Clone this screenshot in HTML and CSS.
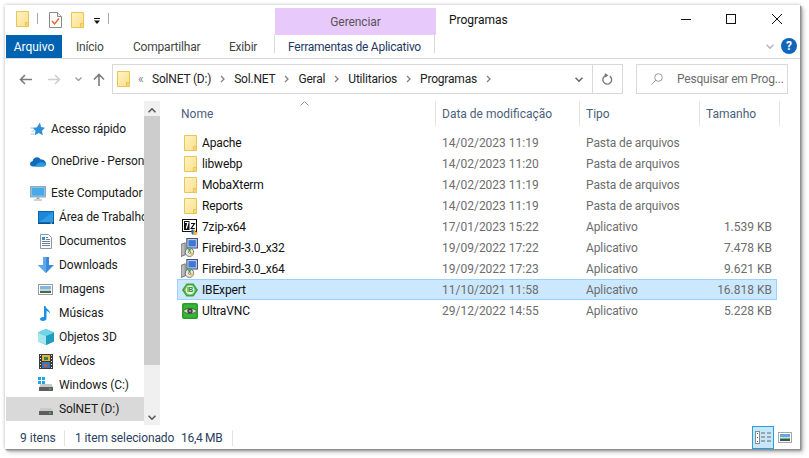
FILE: index.html
```html
<!DOCTYPE html>
<html lang="pt-BR">
<head>
<meta charset="utf-8">
<title>Programas</title>
<link rel="stylesheet" href="styles.css">
</head>
<body>
<svg class="sprite" width="0" height="0" aria-hidden="true">
  <defs>
    <linearGradient id="fg" x1="0" y1="0" x2="1" y2="1"><stop offset="0" stop-color="#fff3c4"/><stop offset="1" stop-color="#fbdf8a"/></linearGradient>
    <symbol id="folder" viewBox="0 0 13 16">
      <path d="M.5.5h12v15H.5z" fill="url(#fg)" stroke="#e9c457"/>
      <path d="M9.5 15.5v-4h3v4z" fill="#f7d778" stroke="#e9c457"/>
    </symbol>
    <symbol id="doc" viewBox="0 0 13 16">
      <path d="M.5.5h8l4 4v11H.5z" fill="#fdfdfd" stroke="#8a8a8a"/>
      <path d="M8.5.5v4h4" fill="#eee" stroke="#8a8a8a"/>
      <path d="M3 9l2.5 3L10 6.5" fill="none" stroke="#e2602a" stroke-width="1.3"/>
    </symbol>
    <symbol id="star" viewBox="0 0 15 14">
      <path d="M9.500.500l1 4.500 4 .7-3 3 .8 4.600-4-2.300-4 2.200.7-4.400-3-2.800 4.400-.8z" fill="#2f8fd6"/>
      <path d="M0 6h4M1 9h3M0 12h4" stroke="#9cc8e8"/>
    </symbol>
    <symbol id="cloud" viewBox="0 0 16 11">
      <path d="M3 10.500C.8 10.500 0 9 0 7.800 0 6.300 1.200 5.300 2.500 5.300 3 2.800 5 1.300 7 1.300c1.800 0 3 1 3.700 2.200C13.500 3 16 5 16 7.800c0 1.500-1 2.700-2.700 2.700z" fill="#0f6cbd"/>
      <path d="M5 10.500c2-4 6-6 11-2.500 0 1.500-1 2.500-2.700 2.500z" fill="#2b9be0"/>
    </symbol>
    <symbol id="pc" viewBox="0 0 16 15">
      <rect x=".5" y=".5" width="15" height="10.500" fill="#7fc4ee" stroke="#9aa7b0"/>
      <rect x="2" y="2" width="12" height="7.500" fill="#49a8e6"/>
      <path d="M6.500 11.500h3v1.500h-3zM4 13.500h8v1H4z" fill="#9aa7b0"/>
    </symbol>
    <symbol id="desk" viewBox="0 0 16 13">
      <rect x=".5" y=".5" width="15" height="11.500" fill="#2f9ae6" stroke="#0a64a8"/>
      <path d="M1 1h14L1 11z" fill="#1d86d8"/>
      <path d="M0 11.500h16V13H0z" fill="#06538f"/>
      <path d="M12.500 11.800h1.500v.7h-1.500z" fill="#fff"/>
    </symbol>
    <symbol id="docs" viewBox="0 0 12 15">
      <path d="M.5.500h8l3 3v11H.5z" fill="#fafafa" stroke="#8b99a6"/>
      <path d="M2 3h3v3H2z" fill="#3a8dca"/>
      <path d="M6 3.500h2M6 5.500h4M2 7.500h8M2 9.500h8M2 11.500h8" stroke="#6d8296"/>
    </symbol>
    <symbol id="down" viewBox="0 0 16 16">
      <path d="M5 0h6v8h5l-8 8-8-8h5z" fill="#3b8ad8"/>
      <path d="M5 0h3v16L0 8h5z" fill="#60a8ea"/>
    </symbol>
    <symbol id="pic" viewBox="0 0 15 11">
      <rect x=".5" y=".5" width="14" height="10" fill="#fff" stroke="#9a9a9a"/>
      <rect x="2" y="2" width="11" height="3.500" fill="#7db6e8"/>
      <rect x="2" y="5.500" width="11" height="1.500" fill="#c5d8c8"/>
      <path d="M2 7h11v2H2z" fill="#3f6a55"/>
    </symbol>
    <symbol id="music" viewBox="0 0 11 15">
      <path d="M4 0h1.500c0 3 5 3.500 4.500 8-.5-2-2.500-3-3.500-3v7.500C6.500 14 5 15 3 15c-1.800 0-3-1-3-2s1.400-2.200 4-2z" fill="#1e8fe6"/>
    </symbol>
    <symbol id="cube" viewBox="0 0 16 16">
      <path d="M8 0l8 3.500v9L8 16l-8-3.500v-9z" fill="#35b5d2"/>
      <path d="M0 3.500L8 7v9l-8-3.500z" fill="#a5e6ee"/>
      <path d="M16 3.500L8 7v9l8-3.500z" fill="#1f9dc0"/>
      <path d="M8 0l8 3.500L8 7 0 3.500z" fill="#6fd5e6"/>
    </symbol>
    <symbol id="film" viewBox="0 0 14 15">
      <rect width="14" height="15" fill="#3a3a3a"/>
      <path d="M3 1h8v6H3z" fill="#d9b64a"/>
      <path d="M3 8h8v6H3z" fill="#3b78b8"/>
      <path d="M5 3h4v3H5z" fill="#46803e"/>
      <path d="M5 10h3v3H5z" fill="#c65a3a"/>
      <path d="M1 1h1v1H1zM1 4h1v1H1zM1 7h1v1H1zM1 10h1v1H1zM1 13h1v1H1zM12 1h1v1h-1zM12 4h1v1h-1zM12 7h1v1h-1zM12 10h1v1h-1zM12 13h1v1h-1z" fill="#eee"/>
    </symbol>
    <symbol id="drive" viewBox="0 0 14 7">
      <path d="M1.500 0h11L14 3.500H0z" fill="#c9c9c9"/>
      <rect y="3" width="14" height="4" rx=".5" fill="#5b5f60"/>
      <rect x="10" y="4.500" width="2" height="1" fill="#5ed05a"/>
    </symbol>
    <symbol id="win" viewBox="0 0 7 7">
      <path d="M0 0h3v3H0zM4 0h3v3H4zM0 4h3v3H0zM4 4h3v3H4z" fill="#1fa5e8"/>
    </symbol>
    <symbol id="sevenz" viewBox="0 0 16 16">
      <rect x=".5" y=".5" width="14" height="12" fill="#fff" stroke="#111"/>
      <rect x="2" y="2" width="5.500" height="9" fill="#111"/>
      <path d="M3 3.500h3L4.300 9.500" fill="none" stroke="#fff" stroke-width="1.200"/>
      <path d="M9 4.500h3.500L9.200 9.500h3.500" fill="none" stroke="#111" stroke-width="1.200"/>
      <path d="M11.500 10.500h2v2.500h2v2l-2 1h-2z" fill="#f2b632"/>
      <path d="M9.500 10.500h2v5.500l-2-1z" fill="#2468b8"/>
    </symbol>
    <symbol id="setup" viewBox="0 0 16 18">
      <path d="M0 6l4-1.500V16l-4 1.500z" fill="#b9b9b9" stroke="#5a5a5a" stroke-width=".7"/>
      <rect x="5.500" y=".5" width="10" height="9" fill="#c9d4e6" stroke="#3c4f7a"/>
      <rect x="7" y="2" width="7" height="6" fill="#3e78d6"/>
      <path d="M4 9.500l7.500 1v2l-7.500-1z" fill="#8a8f98"/>
      <circle cx="8" cy="13.500" r="4" fill="#e8e8e8" stroke="#555" stroke-width=".7"/>
      <path d="M8 13.500L6 10l4 0z" fill="#35b34a"/>
      <path d="M8 13.500L12 14l-2 3z" fill="#e8c53a"/>
      <circle cx="8" cy="13.500" r="1" fill="#fff" stroke="#333" stroke-width=".5"/>
    </symbol>
    <symbol id="ib" viewBox="0 0 16 16">
      <path d="M4.500 1.500h7L16 8l-4.500 6.500h-7L0 8z" fill="#3ea23c"/>
      <path d="M4.800 3h6.400L14 8l-2.800 5H4.800L2 8z" fill="#69c85a"/>
      <circle cx="8" cy="8" r="4.400" fill="#eaf7e4"/>
      <text x="8" y="10.400" class="ib-text">IB</text>
    </symbol>
    <symbol id="vnc" viewBox="0 0 16 16">
      <rect width="16" height="16" rx="2" fill="#2fa52f"/>
      <rect x="1" y="1" width="14" height="14" rx="1.500" fill="#36b636" stroke="#1e7d1e" stroke-width=".5"/>
      <path d="M1.500 8C4 4.500 12 4.500 14.500 8 12 11.500 4 11.500 1.500 8z" fill="#d8d8cf" stroke="#333" stroke-width=".6"/>
      <circle cx="8" cy="8" r="2.700" fill="#444"/>
      <circle cx="8" cy="8" r="1" fill="#a8a8a8"/>
    </symbol>
    <symbol id="chev" viewBox="0 0 7 4"><path d="M.5.500L3.500 3.500 6.500.500" fill="none" stroke="currentColor" stroke-width="1.300"/></symbol>
    <symbol id="crumb" viewBox="0 0 5 8"><path d="M1 1l3 3-3 3" fill="none" stroke="currentColor" stroke-width="1.300"/></symbol>
  </defs>
</svg>

<div class="window">
  <header class="titlebar">
    <svg class="ic-folder qa-first"><use href="#folder"/></svg>
    <span class="qa-sep"></span>
    <svg class="ic-folder qa-doc"><use href="#doc"/></svg>
    <svg class="ic-folder qa-fold"><use href="#folder"/></svg>
    <svg class="qa-drop" viewBox="0 0 6 6"><path d="M0 0h6v1H0zM0 2.500h6L3 6z" fill="#111"/></svg>
    <span class="qa-sep qa-sep2"></span>
    <div class="ctx-head">Gerenciar</div>
    <div class="win-title">Programas</div>
    <div class="win-btns">
      <svg class="wb wb-min" viewBox="0 0 10 10"><path d="M0 5.500h10" stroke="#111"/></svg>
      <svg class="wb wb-max" viewBox="0 0 10 10"><rect x=".5" y=".5" width="9" height="9" fill="none" stroke="#111"/></svg>
      <svg class="wb wb-close" viewBox="0 0 10 10"><path d="M0 0l10 10M10 0L0 10" stroke="#111"/></svg>
    </div>
  </header>

  <nav class="tabs">
    <div class="tab tab-file">Arquivo</div>
    <div class="tab tab-inicio">Início</div>
    <div class="tab tab-share">Compartilhar</div>
    <div class="tab tab-view">Exibir</div>
    <div class="tab tab-ctx">Ferramentas de Aplicativo</div>
    <svg class="collapse"><use href="#chev"/></svg>
    <div class="help">?</div>
  </nav>

  <div class="addressbar">
    <svg class="nav nav-back" viewBox="0 0 13 11"><path d="M13 5.500H1.500M6 1L1.500 5.500 6 10" fill="none" stroke="#7b7b7b" stroke-width="1.600"/></svg>
    <svg class="nav nav-fwd" viewBox="0 0 13 11"><path d="M0 5.500h11.500M7 1l4.500 4.500L7 10" fill="none" stroke="#cfcfcf" stroke-width="1.600"/></svg>
    <svg class="nav-recent"><use href="#chev"/></svg>
    <svg class="nav nav-up" viewBox="0 0 12 13"><path d="M6 13V1.500M1 6.500l5-5 5 5" fill="none" stroke="#7b7b7b" stroke-width="1.600"/></svg>
    <div class="addr">
      <svg class="ic-folder addr-folder"><use href="#folder"/></svg>
      <span class="overflow">«</span>
      <span class="crumb-text c1">SolNET (D:)</span>
      <svg class="sep-crumb"><use href="#crumb"/></svg>
      <span class="crumb-text">Sol.NET</span>
      <svg class="sep-crumb"><use href="#crumb"/></svg>
      <span class="crumb-text">Geral</span>
      <svg class="sep-crumb"><use href="#crumb"/></svg>
      <span class="crumb-text">Utilitarios</span>
      <svg class="sep-crumb"><use href="#crumb"/></svg>
      <span class="crumb-text">Programas</span>
      <svg class="sep-crumb"><use href="#crumb"/></svg>
      <svg class="addr-drop"><use href="#chev"/></svg>
      <div class="refresh">
        <svg viewBox="0 0 12 13" class="refresh-ic"><path d="M5 2.500A4.800 4.800 0 1 0 8.500 3.300" fill="none" stroke="#7b7b7b" stroke-width="1.500"/><path d="M3 0l4 2.500-4 2.500z" fill="#7b7b7b"/></svg>
      </div>
    </div>
    <div class="search">
      <svg class="search-ic" viewBox="0 0 12 12"><circle cx="7.500" cy="4.500" r="3.800" fill="none" stroke="#9a9a9a"/><path d="M4.800 7.200L.5 11.500" stroke="#9a9a9a"/></svg>
      <span class="search-text">Pesquisar em Prog...</span>
    </div>
  </div>

  <div class="body">
    <aside class="sidebar">
      <ul class="tree">
        <li class="top"><svg class="t-star"><use href="#star"/></svg><span>Acesso rápido</span></li>
        <li class="top"><svg class="t-cloud"><use href="#cloud"/></svg><span>OneDrive - Personal</span></li>
        <li class="top"><svg class="t-pc"><use href="#pc"/></svg><span>Este Computador</span></li>
        <li class="child"><svg class="t-desk"><use href="#desk"/></svg><span>Área de Trabalho</span></li>
        <li class="child"><svg class="t-docs"><use href="#docs"/></svg><span>Documentos</span></li>
        <li class="child"><svg class="t-down"><use href="#down"/></svg><span>Downloads</span></li>
        <li class="child"><svg class="t-pic"><use href="#pic"/></svg><span>Imagens</span></li>
        <li class="child"><svg class="t-music"><use href="#music"/></svg><span>Músicas</span></li>
        <li class="child"><svg class="t-cube"><use href="#cube"/></svg><span>Objetos 3D</span></li>
        <li class="child"><svg class="t-film"><use href="#film"/></svg><span>Vídeos</span></li>
        <li class="child">
          <span class="t-drive-wrap"><svg class="t-win"><use href="#win"/></svg><svg class="t-drive"><use href="#drive"/></svg></span>
          <span>Windows (C:)</span>
        </li>
        <li class="child active">
          <span class="t-drive-wrap"><svg class="t-drive"><use href="#drive"/></svg></span>
          <span>SolNET (D:)</span>
        </li>
      </ul>
    </aside>
    <div class="scrollbar">
      <svg class="sb-up"><use href="#chev"/></svg>
      <div class="sb-thumb"></div>
      <svg class="sb-down"><use href="#chev"/></svg>
    </div>
    <main class="files">
      <div class="head">
        <svg class="sort" viewBox="0 0 9 5"><path d="M.5 4.500l4-4 4 4" fill="none" stroke="#9a9a9a"/></svg>
        <div class="col c-name">Nome</div>
        <div class="col c-date">Data de modificação</div>
        <div class="col c-type">Tipo</div>
        <div class="col c-size">Tamanho</div>
      </div>
      <div class="rows">
        <div class="row"><span class="name"><svg class="fi fi-folder"><use href="#folder"/></svg>Apache</span><span class="date">14/02/2023 11:19</span><span class="type">Pasta de arquivos</span><span class="size"></span></div>
        <div class="row"><span class="name"><svg class="fi fi-folder"><use href="#folder"/></svg>libwebp</span><span class="date">14/02/2023 11:20</span><span class="type">Pasta de arquivos</span><span class="size"></span></div>
        <div class="row"><span class="name"><svg class="fi fi-folder"><use href="#folder"/></svg>MobaXterm</span><span class="date">14/02/2023 11:19</span><span class="type">Pasta de arquivos</span><span class="size"></span></div>
        <div class="row"><span class="name"><svg class="fi fi-folder"><use href="#folder"/></svg>Reports</span><span class="date">14/02/2023 11:19</span><span class="type">Pasta de arquivos</span><span class="size"></span></div>
        <div class="row"><span class="name"><svg class="fi"><use href="#sevenz"/></svg>7zip-x64</span><span class="date">17/01/2023 15:22</span><span class="type">Aplicativo</span><span class="size">1.539 KB</span></div>
        <div class="row"><span class="name"><svg class="fi fi-setup"><use href="#setup"/></svg>Firebird-3.0_x32</span><span class="date">19/09/2022 17:22</span><span class="type">Aplicativo</span><span class="size">7.478 KB</span></div>
        <div class="row"><span class="name"><svg class="fi fi-setup"><use href="#setup"/></svg>Firebird-3.0_x64</span><span class="date">19/09/2022 17:23</span><span class="type">Aplicativo</span><span class="size">9.621 KB</span></div>
        <div class="row selected"><span class="name"><svg class="fi"><use href="#ib"/></svg>IBExpert</span><span class="date">11/10/2021 11:58</span><span class="type">Aplicativo</span><span class="size">16.818 KB</span></div>
        <div class="row"><span class="name"><svg class="fi"><use href="#vnc"/></svg>UltraVNC</span><span class="date">29/12/2022 14:55</span><span class="type">Aplicativo</span><span class="size">5.228 KB</span></div>
      </div>
    </main>
  </div>

  <footer class="status">
    <span class="st st-count">9 itens</span>
    <span class="st st-sel">1 item selecionado</span>
    <span class="st st-mb">16,4 MB</span>
    <div class="views">
      <div class="view-details">
        <svg viewBox="0 0 16 13" class="vd-ic">
          <rect x=".5" y=".5" width="4" height="12" fill="#fff" stroke="#8c8c8c"/>
          <path d="M2 2h1v1H2zM2 6h1v1H2z" fill="#555"/><path d="M2 10h1v1H2z" fill="#c0392b"/>
          <path d="M6 2h4M12 2h4M6 6h4M12 6h4M6 10h4M12 10h4" stroke="#666"/>
        </svg>
      </div>
      <svg class="view-thumb" viewBox="0 0 14 11">
        <rect x=".5" y=".5" width="13" height="10" fill="#fff" stroke="#a8a8a8"/>
        <rect x="2" y="2" width="10" height="3" fill="#5ea9e8"/>
        <rect x="2" y="5" width="10" height="1.500" fill="#cfe0d6"/>
        <rect x="2" y="6.500" width="10" height="2.500" fill="#345e4a"/>
      </svg>
    </div>
  </footer>
</div>
</body>
</html>
```

FILE: styles.css
```css
* { box-sizing: border-box; }
html, body { margin: 0; padding: 0; background: #fff; }
body {
  width: 809px; height: 458px; overflow: hidden;
  font-family: Roboto, "Liberation Sans", sans-serif;
  font-size: 12px; color: #1a1a1a;
}
.sprite { position: absolute; }
svg { display: block; flex: none; }
.ib-text { font-family: "Liberation Sans", sans-serif; font-size: 6.500px; font-weight: 700; fill: #2d8a2d; text-anchor: middle; }

.window {
  margin: 5px 0 0 5px; width: 795px; height: 444px;
  background: #fff; display: flex; flex-direction: column;
  box-shadow: 1px 1px 1px #8f8f8f, 2px 2px 2px #a5a5a5, 3px 3px 5px rgba(0,0,0,.25), 0 -1px 3px rgba(0,0,0,.1), -1px 0 3px rgba(0,0,0,.1);
}

/* title bar */
.titlebar { height: 30px; display: flex; align-items: flex-start; flex: none; }
.ic-folder { width: 13px; height: 16px; }
.qa-first { margin: 6px 0 0 11px; }
.qa-sep { width: 1px; height: 11px; background: #a8a8a8; margin: 8px 0 0 8px; }
.qa-doc { margin: 7px 0 0 11px; }
.qa-fold { margin: 7px 0 0 9px; }
.qa-drop { width: 6px; height: 6px; margin: 13px 0 0 10px; }
.qa-sep2 { margin-left: 8px; }
.ctx-head {
  width: 161px; height: 27px; margin: 3px 0 0 166px;
  background: #e8c9fc; color: #555; text-align: center; line-height: 28px;
  letter-spacing: -.1px;
}
.win-title { margin: 7px 0 0 13px; line-height: 16px; color: #111; }
.win-btns { margin-left: auto; display: flex; }
.wb { width: 10px; height: 10px; margin-top: 9px; }
.wb-max { margin-left: 35px; }
.wb-close { margin: 9px 18px 0 36px; }

/* ribbon tabs */
.tabs { height: 24px; display: flex; align-items: stretch; border-bottom: 1px solid #dadbdc; flex: none; color: #444; letter-spacing: -.2px; white-space: nowrap; }
.tab { line-height: 24px; }
.tab-file { width: 56px; margin-left: 1px; background: #0063b1; color: #fff; text-align: center; height: 23px; letter-spacing: 0; }
.tab-inicio { width: 28px; margin-left: 14px; }
.tab-share { width: 67px; margin-left: 29px; }
.tab-view { width: 28px; margin-left: 29px; }
.tab-ctx {
  width: 161px; height: 18px; margin-left: 17px; line-height: 25px; text-align: center;
  border: 1px solid #d9d9d9; border-width: 0 1px; color: #1f3a5f; letter-spacing: -.25px;
}
.collapse { width: 8px; height: 5px; margin: 9px 0 0 331px; color: #b5b5b5; }
.help {
  width: 16px; height: 16px; border-radius: 50%; margin: 3px 0 0 7px;
  background: #0e66bb; color: #fff; font-weight: 700; font-size: 12px; line-height: 16px; text-align: center; letter-spacing: 0;
}

/* address */
.addressbar { height: 42px; display: flex; align-items: center; flex: none; padding-bottom: 2px; }
.nav-back { width: 13px; height: 11px; margin-left: 14px; }
.nav-fwd { width: 13px; height: 11px; margin-left: 16px; }
.nav-recent { width: 7px; height: 4px; margin-left: 14px; color: #9b9b9b; }
.nav-up { width: 12px; height: 13px; margin-left: 11px; }
.addr {
  width: 511px; height: 30px; margin-left: 7px; border: 1px solid #d9d9d9;
  display: flex; align-items: center; color: #222; letter-spacing: -.2px;
}
.addr-folder { margin-left: 4px; }
.overflow { margin-left: 8px; color: #888; font-size: 12px; width: 7px; line-height: 14px; }
.crumb-text.c1 { margin-left: 7px; }
.sep-crumb { width: 5px; height: 8px; margin: 0 9px 0 9px; color: #808080; }
.addr-drop { width: 8px; height: 5px; margin-left: auto; color: #666; }
.refresh { width: 30px; height: 28px; margin-left: 9px; border-left: 1px solid #d9d9d9; display: flex; align-items: center; justify-content: center; }
.refresh-ic { width: 11px; height: 12px; }
.search {
  width: 152px; height: 30px; margin-left: 13px; border: 1px solid #d9d9d9;
  display: flex; align-items: center; color: #6d6d6d; white-space: nowrap;
}
.search-ic { width: 12px; height: 12px; margin: 0 14px 0 14px; }
.search-text { letter-spacing: -.2px; }

/* body */
.body { flex: 1; display: flex; min-height: 0; }
.sidebar { width: 138px; margin-left: 1px; overflow: hidden; flex: none; padding-top: 16px; }
.tree { list-style: none; margin: 0; padding: 0; letter-spacing: -.1px; }
.tree li { height: 24px; display: flex; align-items: center; white-space: nowrap; color: #1a1a1a; }
.tree li.top { margin-bottom: 8px; padding-left: 24px; }
.tree li.top:nth-child(3) { margin-bottom: 0; }
.tree li.child { padding-left: 32px; }
.tree li.child span:last-child { margin-left: 5px; }
.tree li.top span { margin-left: 5px; }
.tree li.active { background: #d9d9d9; }
.tree svg { width: 16px; height: 16px; }
.t-star { width: 16px !important; height: 14px !important; }
.t-cloud { height: 11px !important; }
.t-pc { height: 15px !important; }
.t-desk { height: 13px !important; }
.t-docs { width: 12px !important; height: 15px !important; margin: 0 2px; }
.t-pic { width: 15px !important; height: 11px !important; margin-right: 1px; }
.t-music { width: 11px !important; height: 15px !important; margin: 0 3px 0 2px; }
.t-film { width: 14px !important; height: 15px !important; margin: 0 1px; }
.t-drive-wrap { width: 16px; height: 16px; position: relative; display: block; flex: none; }
.tree .t-drive { width: 14px; height: 7px; position: absolute; left: 1px; top: 7px; }
.tree .t-win { width: 7px; height: 7px; position: absolute; left: 0; top: 0; }

.scrollbar { width: 16px; background: #f0f0f0; flex: none; display: flex; flex-direction: column; align-items: center; }
.sb-up { width: 8px; height: 5px; margin-top: 7px; color: #555; transform: scaleY(-1); }
.sb-thumb { width: 16px; height: 249px; margin-top: 3px; background: #cdcdcd; }
.sb-down { width: 8px; height: 5px; margin-top: 50px; color: #555; }

.files { flex: 1; min-width: 0; position: relative; margin-left: 17px; }
.head { height: 31px; display: flex; position: relative; color: #4c607a; }
.col { height: 25px; line-height: 27px; border-right: 1px solid #e5e5e5; padding-left: 5px; }
.c-name { width: 259px; padding-left: 4px; }
.c-date { width: 144px; padding-left: 6px; }
.c-type { width: 120px; padding-left: 6px; }
.c-size { width: 80px; padding-left: 6px; }
.sort { position: absolute; left: 123px; top: 0; width: 9px; height: 5px; }
.rows { display: flex; flex-direction: column; }
.row { height: 21px; width: 600px; display: flex; align-items: center; color: #6d6d6d; white-space: nowrap; border: 1px solid transparent; }
.row.selected { background: #cce8ff; border-color: #99d1ff; }
.name { width: 257px; display: flex; align-items: center; color: #111; padding-left: 4px; letter-spacing: -.15px; }
.fi { width: 16px; height: 16px; margin-right: 4px; }
.fi-folder { width: 13px; height: 16px; margin: 0 5px 0 2px; }
.fi-setup { width: 17px; height: 19px; margin-left: -1px; }
.date { width: 144px; padding-left: 7px; }
.type { width: 120px; padding-left: 7px; letter-spacing: -.1px; }
.size { width: 73px; text-align: right; }

/* status */
.status { height: 24px; display: flex; align-items: center; flex: none; color: #2a4060; }
.st { line-height: 16px; margin-top: 2px; white-space: nowrap; }
.st-count { width: 45px; margin-left: 15px; border-right: 1px solid #e3e3e3; }
.st-sel { width: 99px; margin-left: 10px; letter-spacing: -.1px; }
.st-mb { width: 52px; margin-left: 7px; border-right: 1px solid #e3e3e3; letter-spacing: -.3px; }
.views { margin-left: auto; display: flex; align-items: center; margin-right: 8px; height: 100%; }
.view-details { width: 22px; height: 23px; background: #c7e6fa; border: 1px solid #26a0da; display: flex; align-items: center; justify-content: center; }
.vd-ic { width: 16px; height: 13px; }
.view-thumb { width: 14px; height: 11px; margin-left: 4px; }
```
